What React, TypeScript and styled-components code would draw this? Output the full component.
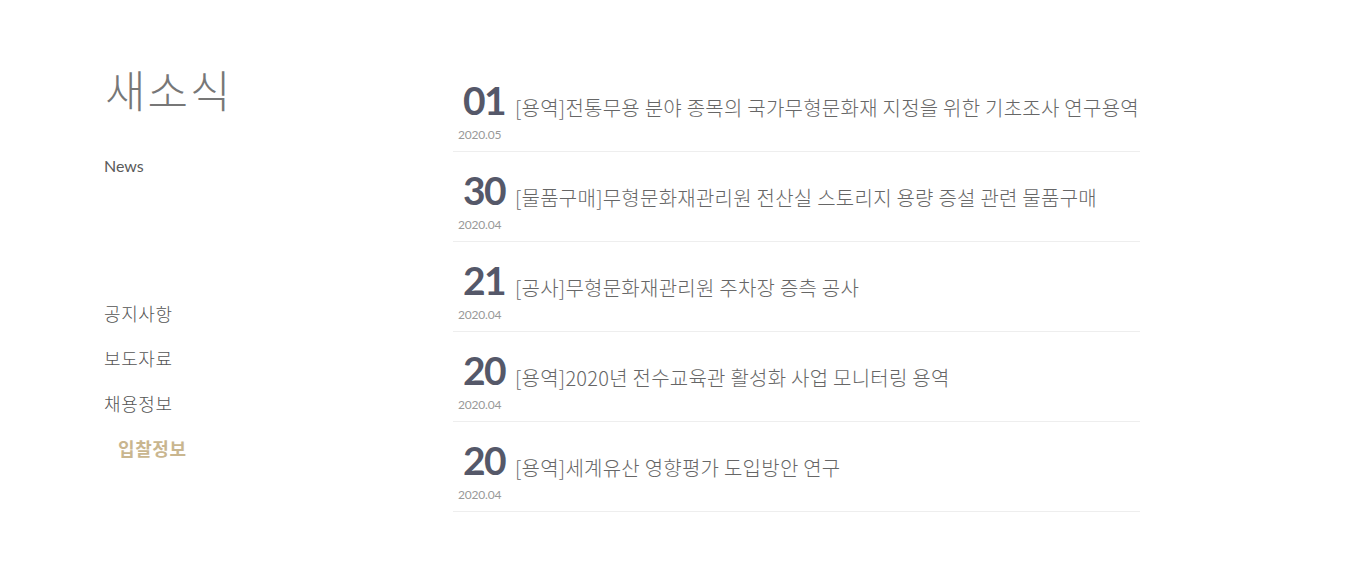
import React from "react";
import styled, { createGlobalStyle } from "styled-components";

const Global = createGlobalStyle`
  html, body { margin: 0; padding: 0; background: #fff; }
  body { font-family: "Noto Sans CJK KR", "Noto Sans", sans-serif; }
  * { box-sizing: border-box; }
`;

const Page = styled.div`
  display: flex;
  padding: 62px 0 0 104px;
  width: 1360px;
  height: 567px;
`;

const Side = styled.aside`
  width: 349px;
  display: flex;
  flex-direction: column;
`;

const Title = styled.h1`
  margin: -1px 0 0 1px;
  font-size: 44px;
  font-weight: 300;
  line-height: 56px;
  color: #777;
  letter-spacing: 2px;
`;

const Sub = styled.div`
  margin-top: 38px;
  font-family: Lato, "Noto Sans", sans-serif;
  font-size: 16px;
  font-weight: 400;
  line-height: 22px;
  color: #5a5a5a;
`;

const Menu = styled.ul`
  list-style: none;
  margin: 124px 0 0 0;
  padding: 0;
  display: flex;
  flex-direction: column;
  gap: 20px;
`;

const MenuItem = styled.li<{ $active?: boolean }>`
  font-size: 18px;
  line-height: 25px;
  letter-spacing: 0.6px;
  font-weight: ${(p) => (p.$active ? 700 : 300)};
  color: ${(p) => (p.$active ? "#c9b68f" : "#555")};
  padding-left: ${(p) => (p.$active ? "14px" : "0")};
`;

const List = styled.ul`
  list-style: none;
  margin: 0;
  padding: 0;
  width: 687px;
`;

const Row = styled.li`
  height: 90px;
  border-bottom: 1px solid #eee;
  display: flex;
  flex-direction: column;
  justify-content: flex-end;
  padding-bottom: 8px;
`;

const Head = styled.div`
  display: flex;
  align-items: baseline;
`;

const Day = styled.span`
  width: 62px;
  text-align: center;
  font-family: Lato, "Noto Sans", sans-serif;
  font-weight: 700;
  font-size: 39px;
  letter-spacing: -1.5px;
  line-height: 40px;
  color: #555869;
  position: relative;
  top: -1px;
`;

const ItemTitle = styled.span`
  font-size: 20px;
  font-weight: 300;
  letter-spacing: 0.25px;
  color: #666;
  white-space: nowrap;
`;

const DateText = styled.div`
  margin: 5px 0 0 5px;
  font-family: Lato, "Noto Sans", sans-serif;
  font-size: 12px;
  font-weight: 400;
  line-height: 16px;
  letter-spacing: -0.2px;
  color: #999;
`;

const items = [
  { day: "01", date: "2020.05", title: "[용역]전통무용 분야 종목의 국가무형문화재 지정을 위한 기초조사 연구용역" },
  { day: "30", date: "2020.04", title: "[물품구매]무형문화재관리원 전산실 스토리지 용량 증설 관련 물품구매" },
  { day: "21", date: "2020.04", title: "[공사]무형문화재관리원 주차장 증측 공사" },
  { day: "20", date: "2020.04", title: "[용역]2020년 전수교육관 활성화 사업 모니터링 용역" },
  { day: "20", date: "2020.04", title: "[용역]세계유산 영향평가 도입방안 연구" },
];

export default function App() {
  return (
    <>
      <Global />
      <Page>
        <Side>
          <Title>새소식</Title>
          <Sub>News</Sub>
          <Menu>
            <MenuItem>공지사항</MenuItem>
            <MenuItem>보도자료</MenuItem>
            <MenuItem>채용정보</MenuItem>
            <MenuItem $active>입찰정보</MenuItem>
          </Menu>
        </Side>
        <List>
          {items.map((it, i) => (
            <Row key={i}>
              <Head>
                <Day>{it.day}</Day>
                <ItemTitle>{it.title}</ItemTitle>
              </Head>
              <DateText>{it.date}</DateText>
            </Row>
          ))}
        </List>
      </Page>
    </>
  );
}
